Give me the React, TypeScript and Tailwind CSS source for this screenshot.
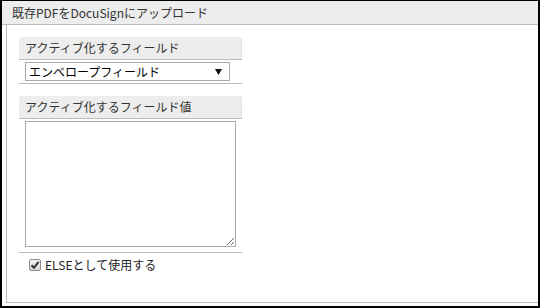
import React from 'react';

const font = "font-['Noto_Sans_CJK_JP','Noto_Sans',sans-serif]";

const SectionHeader: React.FC<{ label: string }> = ({ label }) => (
  <div className="h-[22px] bg-[#ededed] rounded-t-[3px] border-r border-[#e2e2e2] flex items-center pl-[6px] text-[12px] leading-none text-[#333]">
    {label}
  </div>
);

const App: React.FC = () => {
  return (
    <div className={`w-[540px] h-[308px] bg-white border-t border-x-2 border-b-2 border-black flex flex-col ${font}`}>
      <div className="h-[24px] shrink-0 bg-[#ededed] border-b border-[#bbb] flex items-center pl-[10px] text-[12px] leading-none text-[#333]">
        既存PDFをDocuSignにアップロード
      </div>
      <div className="ml-[4px] h-[278px] shrink-0 border-l border-b border-[#bbb] pl-[12px] pt-[12px]">
        <div className="w-[223px]">
          <SectionHeader label="アクティブ化するフィールド" />
          <div className="border-t border-[#bbb] pl-[6px] pt-[2px] pb-[2px] border-b">
            <div className="w-[205px] h-[19px] border border-[#a9a9a9] bg-white flex items-center justify-between pl-[3px] pr-[7px] text-[12px] leading-none text-black">
              <span>エンベロープフィールド</span>
              <svg width="7" height="6" viewBox="0 0 7 6">
                <polygon points="0,0 7,0 3.5,6" fill="#111" />
              </svg>
            </div>
          </div>

          <div className="mt-[12px]">
            <SectionHeader label="アクティブ化するフィールド値" />
            <div className="border-t border-[#bbb] pl-[6px] pt-[2px] pb-[5px] border-b">
              <textarea className="block w-[211px] h-[126px] border border-[#a9a9a9] bg-white outline-none" />
            </div>
          </div>

          <label className="flex items-center mt-[6px] pl-[10px] gap-[4px] text-[12px] leading-none text-[#222]">
            <span className="w-[12px] h-[12px] border border-[#8f8f8f] rounded-[2px] bg-gradient-to-b from-[#f4f4f4] to-[#d8d8d8] flex items-center justify-center">
              <svg width="10" height="10" viewBox="0 0 10 10">
                <path d="M1.5 5.2 L4 7.8 L8.6 1.8" stroke="#333" strokeWidth="2" fill="none" />
              </svg>
            </span>
            <span>ELSEとして使用する</span>
          </label>
        </div>
      </div>
    </div>
  );
};

export default App;
